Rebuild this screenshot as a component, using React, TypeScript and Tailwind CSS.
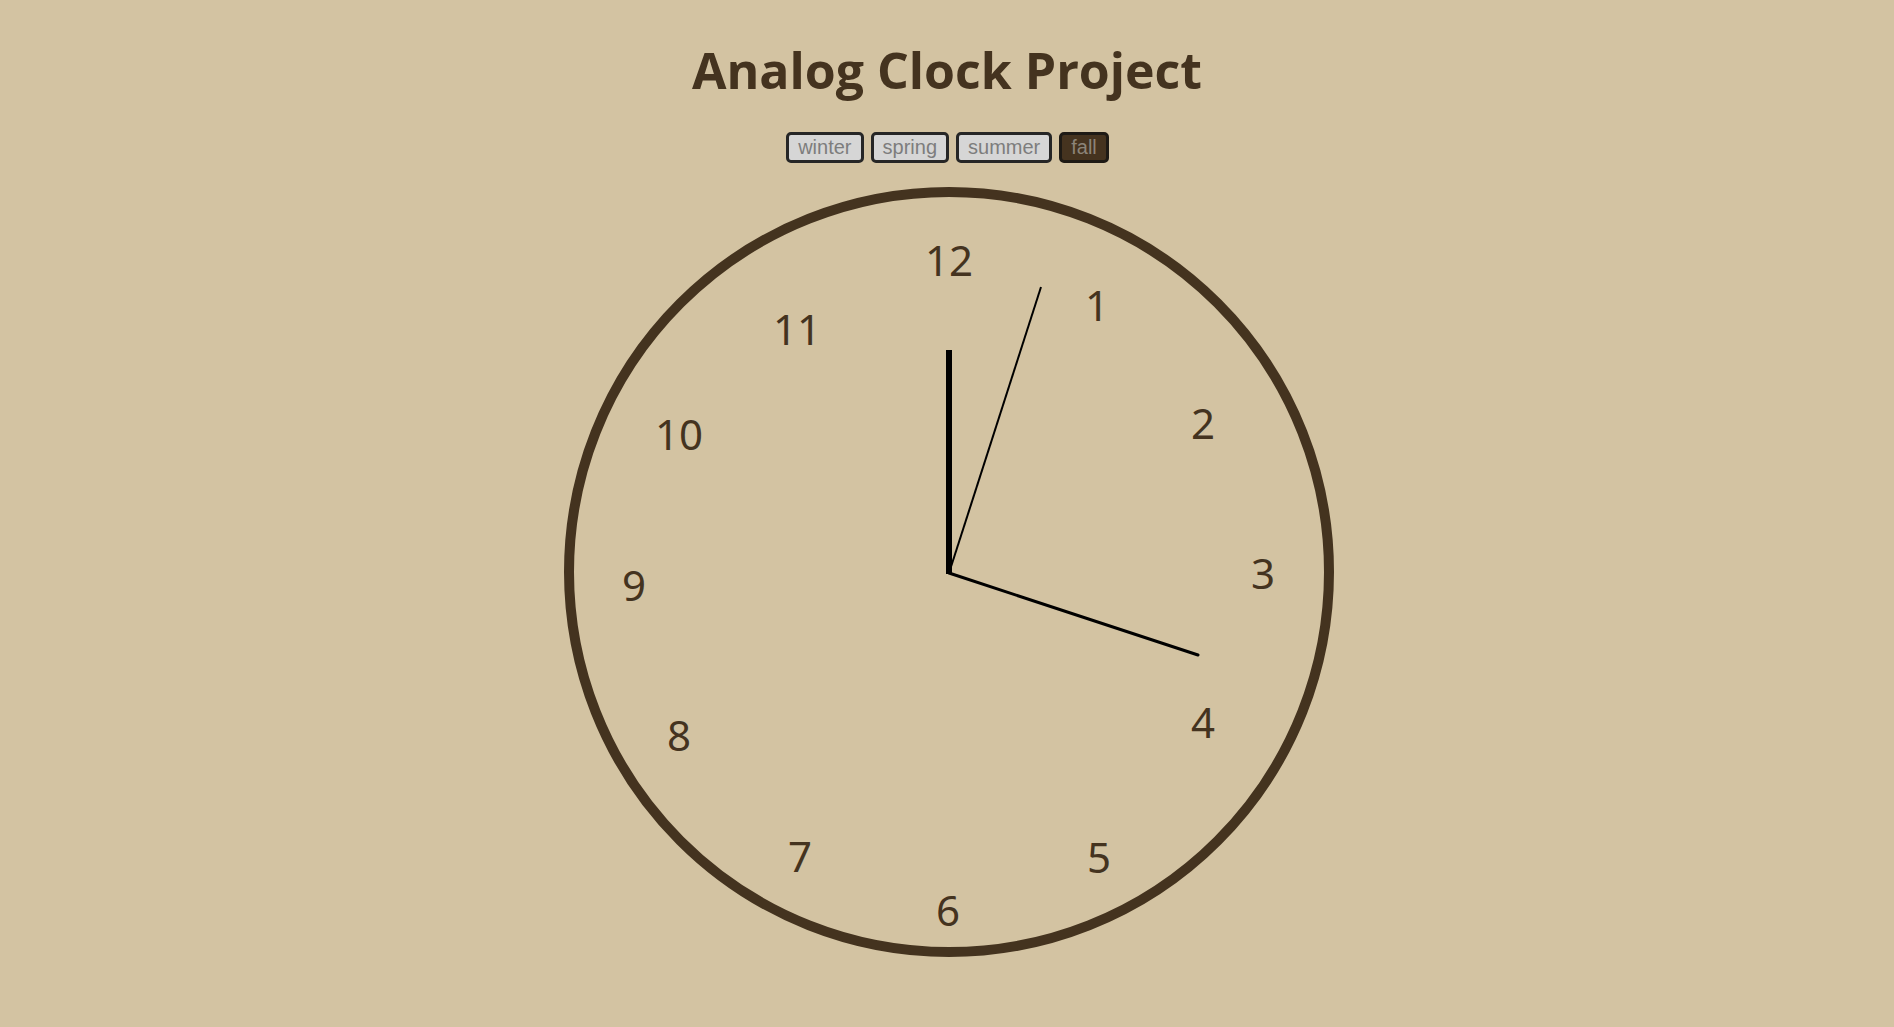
import React from 'react';

const numbers = [
  { n: '12', x: 949, y: 262 },
  { n: '1', x: 1097, y: 307 },
  { n: '2', x: 1203, y: 425 },
  { n: '3', x: 1263, y: 575 },
  { n: '4', x: 1203, y: 724 },
  { n: '5', x: 1099, y: 859 },
  { n: '6', x: 948, y: 912 },
  { n: '7', x: 800, y: 858 },
  { n: '8', x: 679, y: 737 },
  { n: '9', x: 634, y: 587 },
  { n: '10', x: 679, y: 436 },
  { n: '11', x: 797, y: 331 },
];

const seasons = ['winter', 'spring', 'summer', 'fall'];

function App() {
  const active = 'fall';

  return (
    <div className="min-h-[1027px] w-full bg-[#d3c3a2] flex flex-col items-center">
      <h1
        className="pt-[40px] text-[50px] leading-[60px] font-bold text-[#44331f]"
        style={{ fontFamily: '"Open Sans", "DejaVu Sans", sans-serif' }}
      >
        Analog Clock Project
      </h1>

      <div className="mt-[32px] ml-[1px] flex gap-[7px]">
        {seasons.map((s) => (
          <button
            key={s}
            className={
              s === active
                ? 'h-[31px] px-[9px] border-[3px] border-[#1e1a15] rounded-[5px] bg-[#45331f] text-[#8c8478] text-[20px] leading-[25px]'
                : 'h-[31px] px-[9px] border-[3px] border-[#262626] rounded-[5px] bg-[#d6d6d6] text-[#7d7d7d] text-[20px] leading-[25px]'
            }
            style={{ fontFamily: '"Liberation Sans", Arial, sans-serif' }}
          >
            {s}
          </button>
        ))}
      </div>

      <div className="mt-[24px] ml-[4px] relative w-[770px] h-[770px] rounded-full border-[10px] border-[#44331f]">
        {numbers.map((item) => (
          <span
            key={item.n}
            className="absolute -translate-x-1/2 -translate-y-1/2 text-[42px] leading-none text-[#44331f]"
            style={{
              left: item.x - 574,
              top: item.y - 197 - 2,
              fontFamily: '"Noto Sans", "Open Sans", sans-serif',
            }}
          >
            {item.n}
          </span>
        ))}

        {/* hands */}
        <svg className="absolute inset-0" width="750" height="750" viewBox="0 0 750 750">
          <line x1="375" y1="377" x2="375" y2="153" stroke="#000" strokeWidth="6" />
          <line x1="375" y1="376" x2="624" y2="458" stroke="#000" strokeWidth="3" strokeLinecap="round" />
          <line x1="375" y1="376" x2="467" y2="90" stroke="#000" strokeWidth="2" />
        </svg>
      </div>
    </div>
  );
}

export default App;
